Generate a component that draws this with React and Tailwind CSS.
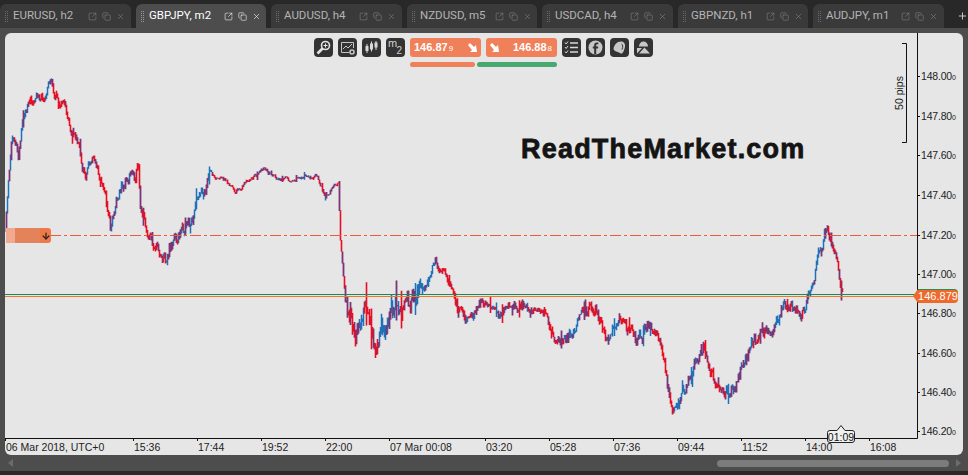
import { SquareArrowOutUpRight, Copy, X, Plus, ArrowDown } from "lucide-react";

const tabs = [
  { name: "EURUSD, h2", w: "w-[131px]" },
  { name: "GBPJPY, m2", w: "w-[130px]", active: true },
  { name: "AUDUSD, h4", w: "w-[131px]" },
  { name: "NZDUSD, m5", w: "w-[130px]" },
  { name: "USDCAD, h4", w: "w-[131px]" },
  { name: "GBPNZD, h1", w: "w-[130px]" },
  { name: "AUDJPY, m1", w: "w-[131px]" },
];

const priceLabels = [
  ["148.00", 76], ["147.80", 115.5], ["147.60", 155], ["147.40", 195], ["147.20", 234.5],
  ["147.00", 274], ["146.80", 313], ["146.60", 352.5], ["146.40", 392], ["146.20", 431],
];

const timeLabels = [
  ["06 Mar 2018, UTC+0", 6], ["15:36", 134], ["17:44", 198], ["19:52", 262], ["22:00", 326],
  ["07 Mar 00:08", 390], ["03:20", 486], ["05:28", 550], ["07:36", 614], ["09:44", 678],
  ["11:52", 742], ["14:00", 806], ["16:08", 870],
];

// rough shape of the price line, in page pixels
const keyPoints = [
  [5, 232], [8, 185], [11, 140], [15, 140], [18, 153], [23, 117], [28, 102], [33, 103], [38, 93], [45, 103],
  [50, 77], [55, 97], [62, 105], [70, 127], [77, 140], [82, 167], [85, 177], [92, 158], [100, 177], [105, 195],
  [110, 225], [118, 190], [128, 178], [138, 168], [140, 215], [150, 238], [165, 258], [175, 235], [190, 225],
  [200, 195], [210, 175], [225, 180], [235, 192], [250, 180], [265, 170], [280, 180], [300, 178], [315, 175],
  [325, 195], [338, 182], [340, 240], [345, 300], [355, 330], [365, 315], [378, 345], [385, 320], [400, 300],
  [415, 305], [422, 285], [435, 262], [445, 275], [455, 300], [465, 318], [480, 305], [500, 312], [520, 305],
  [545, 312], [555, 347], [565, 338], [580, 320], [595, 307], [605, 338], [620, 320], [635, 342], [650, 325],
  [660, 345], [672, 412], [685, 390], [703, 342], [715, 380], [723, 402], [740, 375], [750, 345], [770, 330],
  [785, 305], [805, 310], [815, 270], [825, 230], [835, 247], [842, 290],
];

const priceAt = (x) => {
  for (let i = 1; i < keyPoints.length; i++) {
    const [x0, y0] = keyPoints[i - 1];
    const [x1, y1] = keyPoints[i];
    if (x <= x1) return y0 + ((y1 - y0) * (x - x0)) / (x1 - x0);
  }
  return 290;
};

const volAt = (x) => {
  if (x < 110) return 11;
  if (x < 210) return 16;
  if (x < 338) return 5;
  if (x < 345) return 2;
  if (x < 420) return 30;
  if (x < 560) return 11;
  if (x < 800) return 15;
  return 14;
};

let seed = 11;
const rnd = () => {
  seed = (seed * 16807) % 2147483647;
  return seed / 2147483647;
};

const makeBars = () => {
  const paths = { blue: "", red: "", purple: "" };
  let drift = 0;
  let prev = priceAt(5);
  for (let x = 6; x <= 842; x++) {
    const vol = volAt(x);
    drift = drift * 0.62 + (rnd() - 0.5) * vol * 0.75;
    const y = priceAt(x) + drift;
    const spike = rnd() < 0.12 ? vol * 0.7 : vol * 0.22;
    const top = (Math.min(y, prev) - rnd() * spike).toFixed(1);
    const bottom = (Math.max(y, prev) + rnd() * spike).toFixed(1);
    prev = y;
    const slope = priceAt(x + 3) - priceAt(x - 3);
    const r = rnd();
    const key = slope > 6 ? (r < 0.7 ? "red" : "purple") : slope < -6 ? (r < 0.65 ? "blue" : "purple") : r < 0.22 ? "blue" : r < 0.5 ? "red" : "purple";
    paths[key] += `M${x + 0.5} ${top}V${bottom}`;
  }
  return paths;
};

const bars = makeBars();

const Tab = ({ name, w, active }) => (
  <div className={`${w} h-6 shrink-0 flex items-center rounded-t-md pl-[5px] ${active ? "bg-[#4d4d4d] text-white" : "bg-[#3a3a3a] text-[#b4b4b4]"}`}>
    <span className={`w-[3px] h-[11px] mr-[5px] border-x border-dotted ${active ? "border-[#9a9a9a]" : "border-[#6a6a6a]"}`} />
    <span className="text-[11.500px] leading-none w-[72px] whitespace-nowrap font-['Roboto',sans-serif]">{name}</span>
    <div className={`flex items-center gap-[5px] ml-[3px] ${active ? "text-white" : "text-[#858585]"}`}>
      <SquareArrowOutUpRight size={9} strokeWidth={1.5} />
      <Copy size={9} strokeWidth={1.5} />
      <X size={9} strokeWidth={1.5} />
    </div>
  </div>
);

const IconBtn = ({ children }) => (
  <div className="w-[19px] h-[19px] shrink-0 rounded-[4px] bg-[#333333] flex items-center justify-center text-[#d8d8d8]">
    {children}
  </div>
);

const ArrowDownRight = () => (
  <svg width="11" height="11" viewBox="0 0 11 11" fill="white">
    <path d="M1 3 3 1 7 5 9 3 10 10 3 10 5 8Z" />
  </svg>
);

const Toolbar = () => (
  <div className="absolute left-[309px] top-[5px] flex flex-col gap-[5px]">
    <div className="flex gap-[5px] items-start">
      <IconBtn>
        <svg width="15" height="15" viewBox="0 0 15 15" fill="none" stroke="#e4e4e4">
          <circle cx="9.5" cy="5.5" r="4" strokeWidth="1.6" />
          <path d="M6.5 8.5 1.5 13.5" strokeWidth="2.6" />
          <path d="M9.5 3.5v4M7.5 5.5h4" strokeWidth="1.1" />
        </svg>
      </IconBtn>
      <IconBtn>
        <svg width="16" height="16" viewBox="0 0 16 16" fill="none" stroke="#c4c4c4" strokeWidth="1">
          <path d="M9 12.500H1.500v-10h12V8" />
          <path d="M3 9 6 6l2 2 4-4" />
          <circle cx="12" cy="12" r="2" strokeWidth="1.600" />
        </svg>
      </IconBtn>
      <IconBtn>
        <svg width="15" height="15" viewBox="0 0 15 15" fill="#d8d8d8" stroke="#d8d8d8" strokeWidth="1">
          <path d="M3 4v9M7.500 1.500v10M12 1v9" fill="none" />
          <rect x="2" y="6.500" width="2" height="4" />
          <rect x="6.500" y="4" width="2" height="5" />
          <rect x="11" y="3" width="2" height="4" />
        </svg>
      </IconBtn>
      <IconBtn>
        <div className="w-full h-full relative text-[#d0d0d0]">
          <span className="absolute left-[2px] top-[0px] text-[11px] leading-none">m</span>
          <span className="absolute right-[3px] bottom-[1px] text-[10px] leading-none">2</span>
        </div>
      </IconBtn>
      <div className="w-[71px] h-[19px] rounded-[3px] bg-[#ef8059] flex items-center justify-between pl-[4px] pr-[3px] text-white font-bold">
        <span className="text-[11px] leading-none">146.87<span className="text-[8px] font-normal ml-[1px]">9</span></span>
        <ArrowDownRight />
      </div>
      <div className="w-[71px] h-[19px] rounded-[3px] bg-[#ef8059] flex items-center justify-between pl-[3px] pr-[5px] text-white font-bold">
        <ArrowDownRight />
        <span className="text-[11px] leading-none">146.88<span className="text-[8px] font-normal ml-[1px]">8</span></span>
      </div>
      <IconBtn>
        <svg width="15" height="15" viewBox="0 0 15 15" fill="none" stroke="#d8d8d8" strokeWidth="1">
          <path d="M1 2.500 2.200 4 4 1.500M1 7 2.200 8.500 4 6M1 11.500 2.200 13 4 10.500" />
          <path d="M6 3h8M6 7.500h8M6 12h8" strokeWidth="1.300" />
        </svg>
      </IconBtn>
      <IconBtn>
        <svg width="15" height="15" viewBox="0 0 15 15">
          <circle cx="7.500" cy="7.500" r="7" fill="#c8c8c8" />
          <path d="M8.200 14V8.500H10l.3-2H8.200V5.300c0-.7.3-1 1-1h1.100V2.500H8.800C7 2.500 6.200 3.500 6.200 5v1.500H4.800v2h1.400V14Z" fill="#333333" />
        </svg>
      </IconBtn>
      <IconBtn>
        <svg width="15" height="15" viewBox="0 0 15 15" fill="#c8c8c8">
          <path d="M1.500 9C2 5 5 1.500 9 1.500c2.500 0 4.500 2 4 5-.3 2-1 4.500-2.500 6.500-1 1-2.500 .5-3.500-.5C5.500 11.500 3 12 1.500 9Z" />
          <path d="M9.500 4c1.500.5 1.500 3 .5 5.500" fill="none" stroke="#333333" strokeWidth="1" />
        </svg>
      </IconBtn>
      <IconBtn>
        <svg width="15" height="15" viewBox="0 0 15 15" fill="#c8c8c8">
          <path d="M3 6.500C3 3.500 5 1.500 7.500 1.500S12 3.500 12 6.500Z" />
          <path d="M1 13.500 6 8H1ZM14 13.500H3L8.500 7.500Z" />
        </svg>
      </IconBtn>
    </div>
    <div className="flex gap-[2px] ml-[96px]">
      <div className="w-[65px] h-[5px] rounded-full bg-[#ef8059]" />
      <div className="w-[80px] h-[5px] rounded-full bg-[#47a872]" />
    </div>
  </div>
);

const ChartSvg = () => (
  <svg width="958" height="422" viewBox="5 33 958 422" className="block">
    <path d={bars.blue} stroke="#1f72b8" strokeWidth="1.500" fill="none" />
    <path d={bars.purple} stroke="#7b3575" strokeWidth="1.800" fill="none" />
    <path d={bars.red} stroke="#e60f24" strokeWidth="1.600" fill="none" />
    <path d="M50 235.500H917" stroke="#f0583a" strokeWidth="1" strokeDasharray="11 3 3 3" />
    <path d="M5 294.500H917" stroke="#1f8a46" strokeWidth="1" />
    <path d="M5 296.500H917" stroke="#f27236" strokeWidth="1" />

    {/* axes */}
    <path d="M917.500 33V438.500H5" stroke="#111111" fill="none" />
    {priceLabels.map(([label, y]) => (
      <g key={label}>
        <path d={`M917 ${Math.round(y) + 0.5}h3`} stroke="#111111" />
        <text x="921" y={y + 4} fontSize="10.500" letterSpacing="-0.200" fill="#222222">
          {label}
          <tspan fontSize="7">0</tspan>
        </text>
      </g>
    ))}
    {timeLabels.map(([label, x]) => (
      <g key={label}>
        <path d={`M${x - 0.5} 438v3`} stroke="#111111" />
        <text x={x} y="451" fontSize="10.500" fill="#222222">
          {label}
        </text>
      </g>
    ))}

    {/* 50 pips ruler */}
    <path d="M902 43.500H906.500V142.500H902" stroke="#111111" fill="none" />
    <text transform="translate(903 93) rotate(-90)" textAnchor="middle" fontSize="10.500" fill="#222222">
      50 pips
    </text>

    {/* current time marker */}
    <path d="M827.500 432.500Q827.500 430.500 830 430.500H837L841 425.500 845 430.500H852Q854.500 430.500 854.500 432.500V440Q854.500 442.500 852 442.500H830Q827.500 442.500 827.500 440Z" fill="#f0f0f0" stroke="#222222" />
    <text x="841" y="440.500" textAnchor="middle" fontSize="10.500" fill="#111111">
      01:09
    </text>
  </svg>
);

const OrderTag = () => (
  <div className="absolute left-[1px] top-[195px] w-[45px] h-[15px] flex overflow-hidden rounded-r-[3px]">
    <div className="w-[9px] bg-[#f1a98f]" />
    <div className="w-[25px] bg-[#e4825a]" />
    <div className="flex-1 bg-[#f0794a] flex items-center justify-center text-[#222222]">
      <ArrowDown size={10} strokeWidth={3} />
    </div>
  </div>
);

const PriceTag = () => (
  <div className="absolute left-[908px] top-[256px] flex items-center h-[14px]">
    <span className="w-0 h-0 border-y-[7px] border-y-transparent border-r-[5px] border-r-[#ee6a2c]" />
    <div className="w-[40px] h-[14px] flex items-center justify-center bg-[#ee6a2c] rounded-r-[4px] border-t border-[#2f8a4e] text-white text-[11px] leading-none">
      146.879
    </div>
  </div>
);

const App = () => {
  return (
    <div className="w-[968px] h-[475px] bg-[#282828] overflow-hidden flex flex-col font-['Liberation_Sans',sans-serif]">
      <div className="h-[28px] pt-[4px] flex items-end gap-[5px] shrink-0">
        {tabs.map((t) => (
          <Tab key={t.name} {...t} />
        ))}
        <Plus size={12} strokeWidth={2} className="text-[#d0d0d0] ml-[8px] mb-[6px]" />
      </div>

      <div className="h-[443px] shrink-0 bg-[#4d4d4d] px-[5px] pt-[5px] flex flex-col">
        <div className="relative h-[422px] shrink-0 rounded-md overflow-hidden bg-[#e6e6e6]">
          <ChartSvg />
          <Toolbar />
          <OrderTag />
          <PriceTag />
          <div className="absolute left-[516px] top-[103px] text-[27px] leading-none font-bold tracking-[1.200px] text-[#141414] [-webkit-text-stroke:0.8px_#141414] whitespace-nowrap">
            ReadTheMarket.com
          </div>
        </div>
        <div className="flex-1 flex items-center -mx-[2px]">
          <span className="w-0 h-0 border-y-[4px] border-y-transparent border-r-[5px] border-r-[#6c6c6c] ml-[5px] mr-[704px]" />
          <div className="w-[232px] h-[7px] rounded-full bg-[#7c7c7c]" />
          <span className="w-0 h-0 border-y-[4px] border-y-transparent border-l-[5px] border-l-[#6c6c6c] ml-[7px]" />
        </div>
      </div>
    </div>
  );
};

export default App;
